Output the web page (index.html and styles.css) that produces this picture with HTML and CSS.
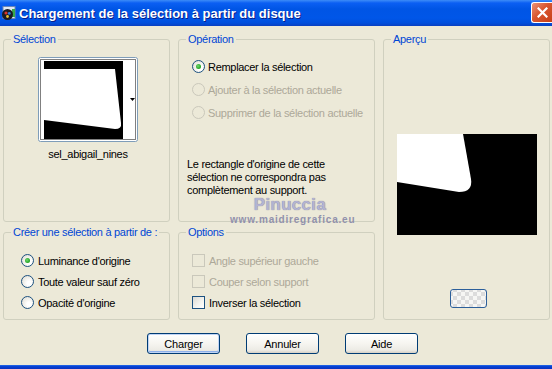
FILE: index.html
```html
<!DOCTYPE html>
<html lang="fr">
<head>
    <meta charset="UTF-8">
    <title>Chargement de la sélection à partir du disque</title>
    <link rel="stylesheet" href="styles.css">
</head>
<body>
    <div class="window">
        <div class="titlebar">
            <svg class="app-icon" width="15" height="15" viewBox="0 0 15 15">
                <rect x="2" y="0.5" width="12" height="12" fill="#dfe8f4" stroke="#6b86b8"/>
                <rect x="11" y="3" width="3" height="8" fill="#3aa84a"/>
                <circle cx="6.5" cy="8.5" r="5.5" fill="#1a1a24"/>
                <circle cx="5" cy="7" r="1.6" fill="#d8342c"/>
                <circle cx="8.3" cy="7.4" r="1.4" fill="#2d7de0"/>
                <circle cx="6.5" cy="10.5" r="1.4" fill="#e8c030"/>
            </svg>
            <span class="title">Chargement de la sélection à partir du disque</span>
            <button class="close-btn" aria-label="Fermer">
                <svg width="11" height="11" viewBox="0 0 11 11">
                    <path d="M1.5 1.5 L9.5 9.5 M9.5 1.5 L1.5 9.5" stroke="#fff" stroke-width="2.2" stroke-linecap="square"/>
                </svg>
            </button>
        </div>

        <div class="dialog">
            <div class="groups">
                <fieldset class="group group-selection">
                    <legend>Sélection</legend>
                    <div class="thumb-box">
                        <svg width="100" height="85" viewBox="0 0 100 85">
                            <rect x="0.5" y="0.5" width="99" height="84" rx="2" fill="#fff" stroke="#7f9db9"/>
                            <rect x="2.5" y="2.5" width="95" height="80" fill="none" stroke="#000" stroke-dasharray="1 1"/>
                            <rect x="6" y="4" width="79" height="78" fill="#000"/>
                            <path d="M6 12 L77 12 L83 66 Q84 72 77 72 L6 63 Z" fill="#fff"/>
                            <path d="M92 41 L97 41 L94.5 44 Z" fill="#000"/>
                        </svg>
                    </div>
                    <div class="thumb-name">sel_abigail_nines</div>
                </fieldset>

                <fieldset class="group group-operation">
                    <legend>Opération</legend>
                    <div class="option-list">
                        <label class="option"><span class="radio checked"></span>Remplacer la sélection</label>
                        <label class="option disabled"><span class="radio"></span>Ajouter à la sélection actuelle</label>
                        <label class="option disabled"><span class="radio"></span>Supprimer de la sélection actuelle</label>
                    </div>
                    <p class="notice">Le rectangle d'origine de cette sélection ne correspondra pas complètement au support.</p>
                </fieldset>

                <fieldset class="group group-preview">
                    <legend>Aperçu</legend>
                    <div class="preview">
                        <svg width="140" height="101" viewBox="0 0 140 101">
                            <rect width="140" height="101" fill="#000"/>
                            <path d="M0 0 L66 0 L74 45 Q76 58 62 58 L0 48 Z" fill="#fff"/>
                        </svg>
                    </div>
                    <button class="pattern-btn" aria-label="Arrière-plan"></button>
                </fieldset>

                <fieldset class="group group-create">
                    <legend>Créer une sélection à partir de :</legend>
                    <div class="option-list compact">
                        <label class="option"><span class="radio checked"></span>Luminance d'origine</label>
                        <label class="option"><span class="radio"></span>Toute valeur sauf zéro</label>
                        <label class="option"><span class="radio"></span>Opacité d'origine</label>
                    </div>
                </fieldset>

                <fieldset class="group group-options">
                    <legend>Options</legend>
                    <div class="option-list compact">
                        <label class="option disabled"><span class="check"></span>Angle supérieur gauche</label>
                        <label class="option disabled"><span class="check"></span>Couper selon support</label>
                        <label class="option"><span class="check"></span>Inverser la sélection</label>
                    </div>
                </fieldset>
            </div>

            <div class="buttons">
                <button class="btn default">Charger</button>
                <button class="btn">Annuler</button>
                <button class="btn">Aide</button>
            </div>
        </div>
        <div class="frame-bottom"></div>

        <div class="watermark">
            <div class="wm-name">Pinuccia</div>
            <div class="wm-site">www.maidiregrafica.eu</div>
        </div>
    </div>
</body>
</html>
```

FILE: styles.css
```css
body {
    margin: 0;
    font-family: "Liberation Sans", Arial, sans-serif;
    font-size: 11px;
    letter-spacing: -0.3px;
    color: #000;
    background-color: #ece9d8;
}
.window {
    position: relative;
    width: 552px;
    height: 369px;
    display: flex;
    flex-direction: column;
    background-color: #ece9d8;
    overflow: hidden;
}
.titlebar {
    height: 26px;
    flex: none;
    display: flex;
    align-items: center;
    padding: 0 0 0 1px;
    letter-spacing: 0;
    background: linear-gradient(to bottom, #3d8cf7 0, #0b5ff3 3px, #0055e5 9px, #0056e8 18px, #004fdc 23px, #0a3fc0 26px);
}
.app-icon {
    flex: none;
    margin-right: 3px;
}
.title {
    flex: 1;
    color: #fff;
    font-weight: bold;
    font-size: 13px;
    text-shadow: 1px 1px 0 #0a1e8a;
    white-space: nowrap;
}
.close-btn {
    width: 21px;
    height: 21px;
    margin: 0 0 2px 0;
    padding: 0;
    display: flex;
    align-items: center;
    justify-content: center;
    border: 1px solid #fff;
    border-right: none;
    border-radius: 3px 0 0 3px;
    background: linear-gradient(135deg, #e9937a 0%, #d9562f 45%, #c63f18 100%);
}
.dialog {
    flex: 1;
    padding: 7px 0 0 3px;
}
.groups {
    display: grid;
    grid-template-columns: 167px 197px 167px;
    grid-template-rows: 189px 94px;
    column-gap: 8px;
    row-gap: 4px;
}
.group {
    margin: 0;
    padding: 0;
    min-width: 0;
    border: 1px solid #d0d0bf;
    border-radius: 3px;
    position: relative;
}
.group legend {
    margin-left: 7px;
    padding: 0 2px;
    line-height: 13px;
    white-space: nowrap;
    color: #0046d5;
}
.group-selection {
    grid-column: 1;
    grid-row: 1;
    display: flex;
    flex-direction: column;
    align-items: center;
}
.group-operation {
    grid-column: 2;
    grid-row: 1;
}
.group-preview {
    grid-column: 3;
    grid-row: 1 / span 2;
}
.group-create {
    grid-column: 1;
    grid-row: 2;
}
.group-options {
    grid-column: 2;
    grid-row: 2;
}
.thumb-box {
    margin: 11px 0 0 3px;
    height: 85px;
}
.thumb-box svg {
    display: block;
}
.thumb-name {
    margin: 6px 0 0 3px;
    line-height: 13px;
}
.option-list {
    display: flex;
    flex-direction: column;
    padding: 9px 0 0 13px;
}
.option-list.compact {
    padding-top: 11px;
}
.group-create .option-list.compact {
    padding-left: 17px;
}
.option {
    display: flex;
    align-items: center;
    height: 23px;
    white-space: nowrap;
}
.option-list.compact .option {
    height: 21px;
}
.option.disabled {
    color: #aca899;
}
.radio {
    width: 11px;
    height: 11px;
    margin-right: 3px;
    flex: none;
    border: 1px solid #1c5180;
    border-radius: 50%;
    background: radial-gradient(circle at 65% 65%, #fff 20%, #dcd9cd 100%);
    position: relative;
}
.group-create .radio {
    margin-right: 4px;
}
.radio.checked::after {
    content: "";
    position: absolute;
    left: 3px;
    top: 3px;
    width: 5px;
    height: 5px;
    border-radius: 50%;
    background: radial-gradient(circle at 40% 40%, #6fd86f 0%, #21a121 70%);
}
.option.disabled .radio {
    border-color: #cac8bb;
    background: #ece9d8;
}
.check {
    width: 11px;
    height: 11px;
    margin-right: 4px;
    flex: none;
    border: 1px solid #1c5180;
    background: linear-gradient(135deg, #dcdad2 0%, #f4f4f0 60%, #fff 100%);
}
.option.disabled .check {
    border-color: #cac8bb;
    background: #ece9d8;
}
.notice {
    margin: 34px 0 0 8px;
    line-height: 13px;
    width: 170px;
}
.preview {
    margin: 88px 0 0 13px;
    height: 101px;
}
.preview svg {
    display: block;
}
.pattern-btn {
    display: block;
    margin: 54px 0 0 66px;
    width: 37px;
    height: 19px;
    padding: 0;
    border: 1px solid #2c5f9a;
    border-radius: 3px;
    background-color: #f6f6f4;
    background-image:
        linear-gradient(45deg, #dcdcdc 25%, transparent 25%, transparent 75%, #dcdcdc 75%),
        linear-gradient(45deg, #dcdcdc 25%, transparent 25%, transparent 75%, #dcdcdc 75%);
    background-size: 8px 8px;
    background-position: 10px 2px, 14px 6px;
}
.buttons {
    display: flex;
    gap: 26px;
    margin: 13px 0 0 144px;
}
.btn {
    width: 73px;
    height: 21px;
    padding: 0;
    font-family: "Liberation Sans", Arial, sans-serif;
    font-size: 11px;
    letter-spacing: -0.2px;
    color: #000;
    border: 1px solid #003c74;
    border-radius: 3px;
    background: linear-gradient(to bottom, #ffffff 0%, #f6f5f0 50%, #ecebe5 85%, #d6d0c5 100%);
}
.btn.default {
    box-shadow: inset 0 0 0 1px #c0d4f5, inset 0 -1px 0 1px #8eb0ea;
}
.frame-bottom {
    height: 4px;
    flex: none;
    background: linear-gradient(to bottom, #2f78f0 0, #0846d6 1px, #0831c0 4px);
}
.watermark {
    position: absolute;
    left: 230px;
    top: 196px;
    width: 120px;
    text-align: center;
    letter-spacing: 0;
    pointer-events: none;
}
.wm-name {
    font-family: "Liberation Sans", sans-serif;
    font-size: 17px;
    line-height: 18px;
    font-weight: bold;
    color: #b4b4d2;
    letter-spacing: 0.3px;
    text-shadow: 0 0 1px #6c6c90;
}
.wm-site {
    font-family: "Liberation Sans", sans-serif;
    font-size: 10px;
    line-height: 12px;
    font-weight: bold;
    color: #9191ac;
    letter-spacing: 0.8px;
}
```
